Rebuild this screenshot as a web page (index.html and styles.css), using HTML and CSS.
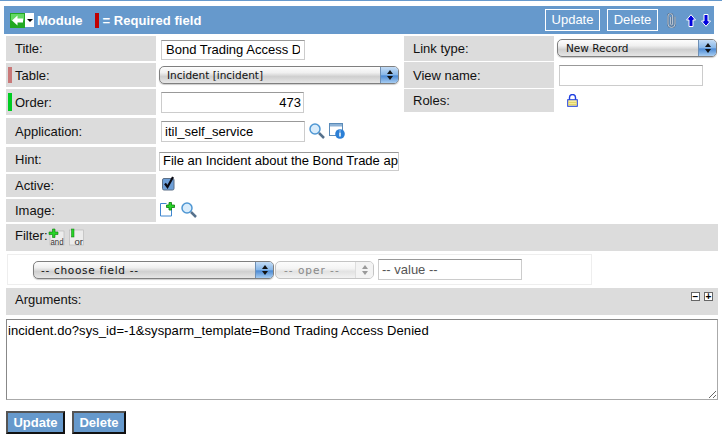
FILE: index.html
```html
<!DOCTYPE html>
<html lang="en">
<head>
<meta charset="utf-8">
<title>Module</title>
<link rel="stylesheet" href="styles.css">
</head>
<body>
<div class="topline"></div>
<header class="bar">
  <span class="back">
    <svg width="15" height="15" viewBox="0 0 15 15"><rect width="15" height="15" fill="#22a822"/><rect x="1" y="1" width="13" height="6.500" fill="#63d863"/><path d="M2 7.500 7.500 2.500V5.500H13V9.500H7.500V12.500z" fill="#fff"/></svg>
    <span class="caret"></span>
  </span>
  <span class="bar-title">Module</span>
  <span class="req-mark"></span>
  <span class="bar-title">= Required field</span>
  <span class="bar-actions">
    <span class="hbtn hbtn-update">Update</span>
    <span class="hbtn hbtn-delete">Delete</span>
    <svg class="clip" width="11" height="15" viewBox="0 0 11 15"><path d="M9 3.500v7.500a3.500 3.500 0 0 1-7 0V3a2.300 2.300 0 0 1 4.600 0v8a1 1 0 0 1-2 0V4" fill="none" stroke="#54708e" stroke-width="1.900"/><path d="M9 3.500v7.500a3.500 3.500 0 0 1-7 0V3a2.300 2.300 0 0 1 4.600 0v8a1 1 0 0 1-2 0V4" fill="none" stroke="#c9d4df" stroke-width=".9"/></svg>
    <svg class="arrow" width="10" height="13" viewBox="0 0 10 13"><path d="M5 .7 9.500 6H7v6.500H3V6H.5z" fill="#0000dd" stroke="#fff"/></svg>
    <svg class="arrow arrow-down" width="10" height="13" viewBox="0 0 10 13"><path d="M5 12.300 9.500 7H7V.5H3V7H.5z" fill="#0000dd" stroke="#fff"/></svg>
  </span>
</header>

<main class="form">
  <div class="top">
    <div class="col-left">
      <div class="row r-title"><label class="lbl">Title:</label><div class="fld"><input class="inp w-title" value="Bond Trading Access Denied"></div></div>
      <div class="row r-table"><label class="lbl"><i class="mark pink"></i>Table:</label><div class="fld fld-sel"><span class="sel w-table"><span class="sel-text">Incident [incident]</span><span class="stepper"><b class="up"></b><b class="down"></b></span></span></div></div>
      <div class="row r-order"><label class="lbl"><i class="mark green"></i>Order:</label><div class="fld"><input class="inp w-order num" value="473"></div></div>
      <div class="row r-app"><label class="lbl">Application:</label><div class="fld"><input class="inp w-app" value="itil_self_service">
        <svg class="mag" width="16" height="16" viewBox="0 0 16 16"><circle cx="6" cy="6" r="5" fill="#d9ecfb" stroke="#4f97d3" stroke-width="1.500"/><path d="m10 10 5 5" stroke="#56718c" stroke-width="2.500"/></svg>
        <svg class="info" width="16" height="16" viewBox="0 0 16 16"><rect x=".5" y=".5" width="13" height="12" fill="#fff" stroke="#5b8bb8"/><rect x="1" y="1" width="12" height="2.500" fill="#8db2d6"/><circle cx="11" cy="11" r="4.800" fill="#2b7fd6"/><path d="M11 9.500v4" stroke="#fff" stroke-width="1.500"/><path d="M11 7.500v1" stroke="#fff"/></svg>
      </div></div>
      <div class="row r-hint"><label class="lbl">Hint:</label><div class="fld fld-sel"><input class="inp w-hint" value="File an Incident about the Bond Trade application"></div></div>
      <div class="row r-active"><label class="lbl">Active:</label><div class="fld fld-check">
        <svg class="check" width="13" height="15" viewBox="0 0 13 15"><rect x=".5" y="2.500" width="11.500" height="11.500" rx="1.500" fill="#6d9fd8" stroke="#5c6f86"/><path d="m3 7.500 2.500 3.500L11 1" fill="none" stroke="#0a0a14" stroke-width="2.200"/></svg>
      </div></div>
      <div class="row r-image"><label class="lbl">Image:</label><div class="fld fld-image">
        <svg class="newdoc" width="16" height="15" viewBox="0 0 16 15"><path d="M.5 1.500h6M.5 1.500v12.500h11V7" fill="none" stroke="#3f86cf"/><path d="M9 .5h2.500V3H14.500v2.500H11.500V8H9V5.500H6.500V3H9z" fill="#27d427" stroke="#0a7a0a" stroke-width=".8"/></svg>
        <svg class="mag2" width="16" height="16" viewBox="0 0 16 16"><circle cx="6" cy="6" r="5" fill="#d9ecfb" stroke="#4f97d3" stroke-width="1.500"/><path d="m10 10 5 5" stroke="#56718c" stroke-width="2.500"/></svg>
      </div></div>
    </div>
    <div class="col-right">
      <div class="row r-link"><label class="lbl">Link type:</label><div class="fld fld-sel"><span class="sel w-link"><span class="sel-text">New Record</span><span class="stepper"><b class="up"></b><b class="down"></b></span></span></div></div>
      <div class="row r-view"><label class="lbl">View name:</label><div class="fld"><input class="inp w-view"></div></div>
      <div class="row r-roles"><label class="lbl">Roles:</label><div class="fld fld-lock">
        <svg class="lock" width="11" height="13" viewBox="0 0 11 13"><path d="M2.500 6V3.500a3 3 0 0 1 6 0V6" fill="none" stroke="#1f3fe0" stroke-width="1.400"/><rect x=".7" y="5.700" width="9.600" height="6.600" fill="#f8ec98" stroke="#1f3fe0"/><path d="M1 8.500h9M1 10.500h9" stroke="#e2d46a"/></svg>
      </div></div>
    </div>
  </div>

  <div class="band band-filter">
    <span class="band-text">Filter:</span>
    <svg class="cond" width="15" height="16" viewBox="0 0 15 16"><rect x="1" y="2" width="14" height="14" fill="#ececec" stroke="#b5b5b5" stroke-width=".6"/><path d="M3.500 0h2.500v3h3v2.500H6v3H3.500v-3H0V3h3.500z" fill="#27d427" stroke="#0a7a0a" stroke-width=".6"/><text x="1.500" y="15.500" class="cond-text" textLength="13" lengthAdjust="spacingAndGlyphs">and</text></svg>
    <svg class="cond cond-or" width="15" height="16" viewBox="0 0 15 16"><rect x=".5" y="1" width="14" height="15" fill="#ececec" stroke="#b5b5b5" stroke-width=".6"/><rect x="2.500" y="0" width="2.500" height="8" fill="#27d427" stroke="#0a7a0a" stroke-width=".5"/><text x="5.500" y="15.500" class="cond-text" textLength="8.500" lengthAdjust="spacingAndGlyphs">or</text></svg>
  </div>

  <div class="filter-box">
    <span class="sel w-field"><span class="sel-text">-- choose field --</span><span class="stepper"><b class="up"></b><b class="down"></b></span></span>
    <span class="sel w-oper off"><span class="sel-text">-- oper --</span><span class="stepper"><b class="up"></b><b class="down"></b></span></span>
    <input class="inp w-value" value="-- value --">
  </div>

  <div class="band band-args">
    <span class="band-text">Arguments:</span>
    <span class="toggles"><span class="tog">−</span><span class="tog">+</span></span>
  </div>

  <div class="ta-wrap">
    <textarea class="ta">incident.do?sys_id=-1&amp;sysparm_template=Bond Trading Access Denied</textarea>
  </div>

  <div class="actions">
    <button class="btn btn-update">Update</button>
    <button class="btn btn-delete">Delete</button>
  </div>
</main>
</body>
</html>
```
FILE: styles.css
```css
html, body { margin: 0; padding: 0; background: #fff; }
body { width: 722px; height: 437px; overflow: hidden; font-family: "Liberation Sans", Arial, sans-serif; font-size: 13px; color: #000; }
.topline { height: 1px; background: #6699cc; margin-bottom: 5px; }

.bar { box-sizing: border-box; height: 28px; margin: 0 8px 0 4px; background: #6699cc; display: flex; align-items: center; padding-left: 6px; color: #fff; font-weight: bold; font-size: 13px; }
.back { display: flex; align-items: center; width: 24px; height: 14px; background: #fff; margin-right: 3px; }
.back svg { display: block; }
.caret { width: 0; height: 0; border: 3px solid transparent; border-top: 3px solid #000; border-bottom: 0; margin-left: 2px; }
.req-mark { width: 4px; height: 15px; background: #c00000; margin: 0 4px 0 12px; }
.bar-title + .req-mark + .bar-title { letter-spacing: .07px; }
.bar-actions { margin-left: auto; display: flex; align-items: center; padding-right: 3px; }
.hbtn { box-sizing: border-box; height: 22px; line-height: 20px; border: 1px solid #fff; text-align: center; font-weight: normal; font-size: 13px; }
.hbtn-update { width: 55px; margin-right: 7px; }
.hbtn-delete { width: 51px; margin-right: 8px; }
.clip { margin-right: 9px; }
.arrow-down { margin-left: 5px; }

.form { padding: 2px 4px 0 6px; }
.top { display: flex; justify-content: space-between; }
.col-left { width: 394px; }
.col-right { width: 314px; }
.row { display: flex; margin-bottom: 2px; }
.lbl { box-sizing: border-box; width: 150px; flex: none; background: #dcdcdc; padding-left: 9px; display: flex; align-items: center; position: relative; color: #111; }
.fld { display: flex; align-items: flex-start; padding: 3px 0 0 5px; flex: 1; }
.fld-sel { padding-left: 3px; }
.col-right .fld { padding-left: 5px; }
.col-right .fld-sel { padding-left: 3px; }

.r-title { height: 25px; }
.r-title .fld { padding-top: 4px; }
.r-table { height: 24px; }
.r-order { height: 26px; margin-bottom: 3px; }
.r-app { height: 26px; margin-bottom: 3px; }
.r-hint { height: 25px; }
.r-hint .fld { padding-top: 5px; }
.r-active { height: 23px; }
.r-image { height: 23px; margin-bottom: 2px; }
.r-link { height: 25px; margin-bottom: 1px; }
.r-view { height: 26px; margin-bottom: 1px; }
.r-roles { height: 23px; }

.mark { position: absolute; left: 2px; top: 4px; bottom: 4px; width: 4px; }
.pink { background: #c97878; }
.green { background: #00cc22; }

.inp { box-sizing: border-box; height: 21px; border: 1px solid #ccc; border-top-color: #999; padding: 0 4px; font: 13px "Liberation Sans", Arial, sans-serif; color: #000; background: #fff; margin: 0; outline: 0; }
.w-title { width: 144px; height: 20px; padding-bottom: 1px; }
.w-order { width: 143px; }
.num { text-align: right; padding-right: 2px; }
.w-app { width: 144px; padding-left: 3px; }
.w-hint { width: 240px; height: 19px; padding: 0 0 2px 3px; }
.w-view { width: 144px; }
.w-value { width: 144px; color: #555; margin-left: 4px; padding-left: 3px; }

.mag { margin: 2px 0 0 4px; }
.info { margin: 2px 0 0 4px; }
.fld-check { padding: 0 0 0 6px; }
.check { margin-top: 2px; }
.fld-image { padding: 3px 0 0 4px; }
.mag2 { margin-left: 5px; }
.fld-lock { padding-top: 5px; }
.lock { margin-left: 8px; }

.sel { box-sizing: border-box; display: inline-flex; height: 18px; border: 1px solid #7f7f7f; border-radius: 5px; background: linear-gradient(#fdfdfd, #f0f0f0 35%, #cfcfcf 60%, #e6e6e6); font: 10.500px "DejaVu Sans", sans-serif; overflow: hidden; align-items: center; box-shadow: 0 1px 1px rgba(0,0,0,.2); }
.sel-text { flex: 1; padding-left: 7px; white-space: nowrap; color: #111; }
.stepper { width: 17px; align-self: stretch; background: linear-gradient(#c4dcf5, #86b6e8 50%, #4c8ad4 55%, #a7cdf2); display: flex; flex-direction: column; align-items: center; justify-content: center; gap: 2px; border-left: 1px solid #6d8fb5; }
.up { width: 0; height: 0; border: 3px solid transparent; border-top: 0; border-bottom: 4px solid #111; }
.down { width: 0; height: 0; border: 3px solid transparent; border-bottom: 0; border-top: 4px solid #111; }
.w-table { width: 240px; }
.w-link { width: 160px; }
.w-link .sel-text { padding-left: 8px; }
.w-field { width: 241px; }
.w-field .sel-text { letter-spacing: .7px; }
.w-oper { width: 99px; margin-left: 1px; }
.w-oper .sel-text { letter-spacing: 1px; padding-left: 8px; }
.off { border-color: #c4c4c4; background: linear-gradient(#fcfcfc, #f4f4f4 40%, #e2e2e2 60%, #f2f2f2); box-shadow: none; }
.off .sel-text { color: #888; }
.off .stepper { background: #f3f3f3; border-left-color: #ddd; }
.off .up { border-bottom-color: #999; }
.off .down { border-top-color: #999; }

.band { background: #dcdcdc; position: relative; display: flex; }
.band-filter { height: 27px; margin: 0 0 3px; padding-left: 9px; align-items: flex-start; }
.band-text { color: #111; }
.band-filter .band-text { margin-top: 4px; }
.cond { margin: 5px 0 0 1px; overflow: visible; }
.cond-or { margin-left: 5px; }
.cond-text { font: 9.500px "Liberation Sans", Arial, sans-serif; fill: #333; }
.filter-box { box-sizing: border-box; width: 585px; height: 31px; margin: 0 0 3px 1px; border: 1px solid #eee; display: flex; align-items: center; padding-left: 25px; }
.band-args { height: 27px; margin-bottom: 4px; padding: 4px 0 0 9px; box-sizing: border-box; }
.toggles { position: absolute; right: 5px; top: 4px; display: flex; gap: 4px; }
.tog { box-sizing: border-box; width: 9px; height: 9px; border: 1px solid #666; background: #fff; font: bold 10px/7px "Liberation Sans", Arial, sans-serif; text-align: center; color: #000; }

.ta-wrap { height: 81px; margin-bottom: 11px; }
.ta { box-sizing: border-box; width: 712px; height: 81px; display: block; border: 1px solid #888; border-bottom-color: #aaa; border-right-color: #aaa; padding: 3px 1px; margin: 0; font: 13px "Liberation Sans", Arial, sans-serif; letter-spacing: .08px; color: #000; outline: 0; }

.actions { display: flex; gap: 7px; }
.btn { box-sizing: border-box; height: 23px; padding: 0; background: #6699cc; color: #fff; font: bold 13px "Liberation Sans", Arial, sans-serif; border: 2px solid #555; border-right-color: #111; border-bottom-color: #111; margin: 0; }
.btn-update { width: 59px; }
.btn-delete { width: 54px; }
```
